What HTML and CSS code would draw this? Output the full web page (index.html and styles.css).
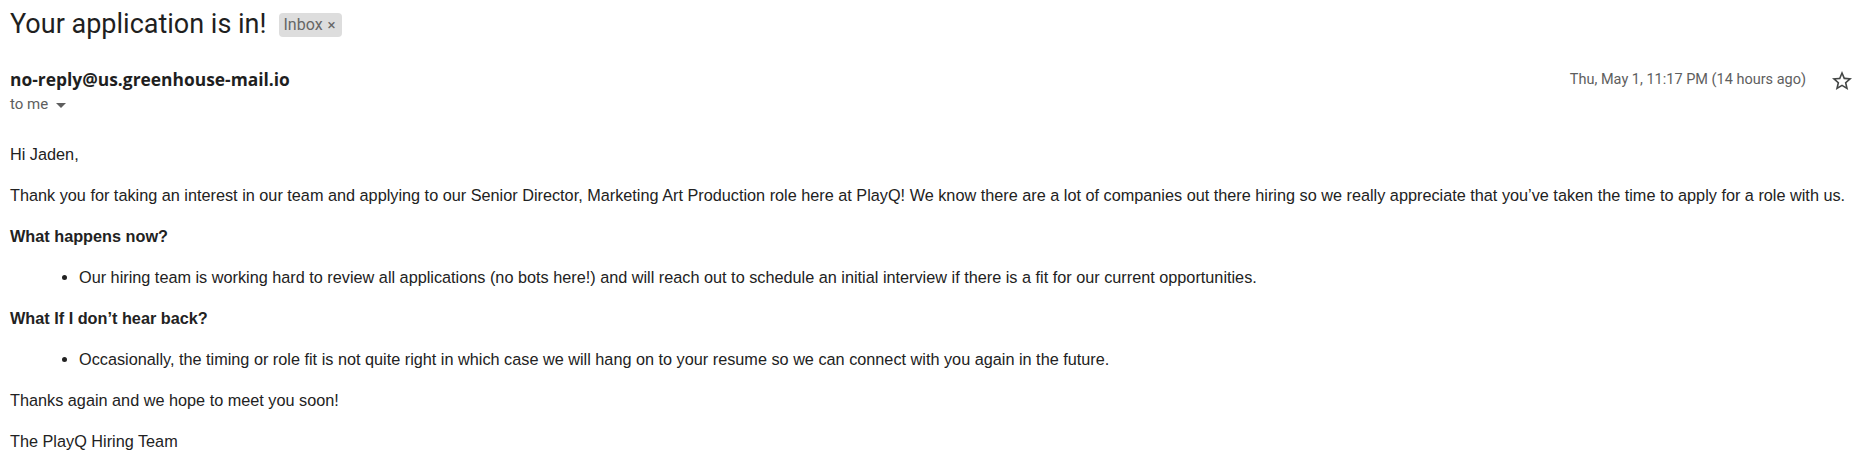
FILE: index.html
```html
<!DOCTYPE html>
<html lang="en">
<head>
<meta charset="utf-8">
<title>Your application is in!</title>
<link rel="stylesheet" href="styles.css">
</head>
<body>
<div class="mail">
  <div class="subject-row">
    <h2 class="subject">Your application is in!</h2>
    <span class="chip">Inbox <span class="chip-x">×</span></span>
  </div>
  <div class="header">
    <div class="from">
      <div class="sender">no-reply@us.greenhouse-mail.io</div>
      <div class="to">to me
        <svg class="caret" viewBox="0 0 10 5" width="10" height="5"><path d="M0 0h10L5 5z" fill="#5e5e5e"/></svg>
      </div>
    </div>
    <div class="meta">
      <span class="date">Thu, May 1, 11:17 PM (14 hours ago)</span>
      <svg class="star" viewBox="0 0 24 24" width="24" height="24"><path fill="#444746" d="M22 9.24l-7.19-.62L12 2 9.19 8.63 2 9.24l5.46 4.73L5.82 21 12 17.27 18.18 21l-1.63-7.03L22 9.24zM12 15.4l-3.76 2.27 1-4.28-3.32-2.88 4.38-.38L12 6.1l1.71 4.04 4.38.38-3.32 2.88 1 4.28L12 15.4z"/></svg>
    </div>
  </div>
  <div class="body">
    <p>Hi Jaden,</p>
    <p>Thank you for taking an interest in our team and applying to our Senior Director, Marketing Art Production role here at PlayQ! We know there are a lot of companies out there hiring so we really appreciate that you’ve taken the time to apply for a role with us.</p>
    <p class="heading">What happens now?</p>
    <ul>
      <li>Our hiring team is working hard to review all applications (no bots here!) and will reach out to schedule an initial interview if there is a fit for our current opportunities.</li>
    </ul>
    <p class="heading">What If I don’t hear back?</p>
    <ul>
      <li>Occasionally, the timing or role fit is not quite right in which case we will hang on to your resume so we can connect with you again in the future.</li>
    </ul>
    <p>Thanks again and we hope to meet you soon!</p>
    <p>The PlayQ Hiring Team</p>
  </div>
</div>
</body>
</html>
```
FILE: styles.css
```css
html, body {
  margin: 0;
  padding: 0;
  background: #ffffff;
}

.mail {
  padding: 0 11px 0 10px;
  font-family: Roboto, "Liberation Sans", Arial, sans-serif;
  color: #1f1f1f;
}

.subject-row {
  display: flex;
  align-items: center;
  gap: 12px;
  padding-top: 6px;
  height: 36px;
}

.subject {
  margin: 0;
  font-family: Roboto, Arial, sans-serif;
  font-weight: 400;
  font-size: 27px;
  line-height: 36px;
  color: #1f1f1f;
}

.chip {
  display: inline-flex;
  align-items: center;
  height: 24px;
  padding: 0 6px 0 5px;
  border-radius: 4px;
  background: #dddddd;
  color: #666666;
  font-size: 16px;
  margin-top: 1px;
}

.chip-x {
  margin-left: 5px;
  font-size: 15px;
  color: #666666;
}

.header {
  display: flex;
  justify-content: space-between;
  align-items: flex-start;
  margin-top: 26px;
}

.sender {
  font-family: "Open Sans", Roboto, sans-serif;
  font-weight: 700;
  font-size: 17.4px;
  line-height: 22px;
  color: #1f1f1f;
}

.to {
  display: flex;
  align-items: center;
  gap: 8px;
  margin-top: 4px;
  font-size: 15px;
  line-height: 20px;
  color: #5e5e5e;
}

.caret {
  margin-top: 2px;
}

.meta {
  display: flex;
  align-items: center;
  gap: 24px;
  height: 22px;
}

.date {
  font-size: 14.5px;
  color: #5e5e5e;
}

.star {
  margin-top: 3px;
}

.body {
  padding-top: 30px;
  font-family: "Liberation Sans", Arial, sans-serif;
  font-size: 16.25px;
  line-height: 20px;
  color: #222222;
}

.body p {
  margin: 0 0 21px;
}

.body .heading {
  font-weight: 700;
}

.body ul {
  margin: 0 0 21px;
  padding-left: 69px;
}
```
